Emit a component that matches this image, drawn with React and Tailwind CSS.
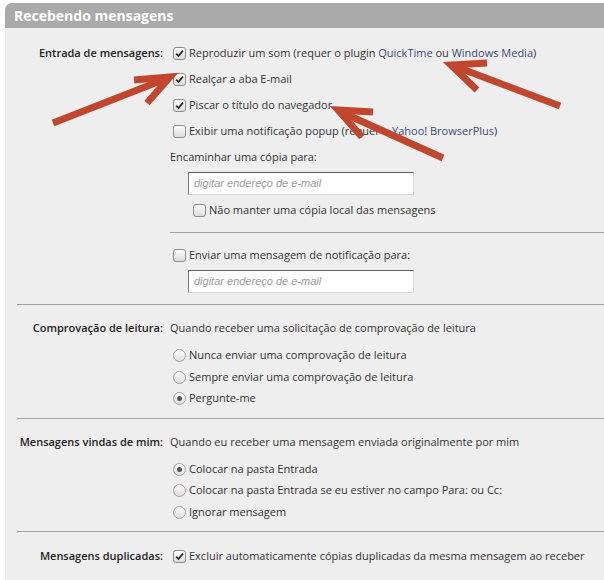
import React from "react";

const font = { fontFamily: '"Open Sans", "Noto Sans", sans-serif' };

function Check({ checked }) {
  return (
    <span className="inline-flex h-[13px] w-[13px] shrink-0 items-center justify-center rounded-[3px] border border-[#8e8e8e] bg-gradient-to-b from-[#fdfdfd] to-[#dcdcdc]">
      {checked && (
        <svg width="9" height="9" viewBox="0 0 9 9">
          <path d="M1.2 4.6 L3.5 7 L7.9 1.6" fill="none" stroke="#2a2a2a" strokeWidth="1.8" />
        </svg>
      )}
    </span>
  );
}

function Radio({ checked }) {
  return (
    <span className="inline-flex h-[13px] w-[13px] shrink-0 items-center justify-center rounded-full border border-[#a0a0a0] bg-gradient-to-b from-[#fdfdfd] to-[#dedede]">
      {checked && <span className="h-[5px] w-[5px] rounded-full bg-[#555]" />}
    </span>
  );
}

function Label({ children }) {
  return <div className="w-[158px] shrink-0 text-right font-semibold text-[#222]">{children}</div>;
}

function Input() {
  return (
    <div className="ml-[18px] flex h-[23px] w-[226px] items-center border-t border-l border-r border-b border-t-[#5e5e5e] border-l-[#7a7a7a] border-r-[#d6d6d6] border-b-[#d6d6d6] bg-white pl-[5px] text-[11px] italic text-[#9a9a9a]" style={{ fontFamily: '"Liberation Sans", Arial, sans-serif' }}>
      digitar endereço de e-mail
    </div>
  );
}

const Link = ({ children }) => <span className="text-[#3a4a78]">{children}</span>;

function Arrows() {
  const c = "#c1462e";
  const w = 7;
  return (
    <svg className="pointer-events-none absolute left-0 top-0" width="604" height="580">
      <g stroke={c} strokeWidth={w} fill="none" strokeLinecap="butt" strokeLinejoin="miter">
        <line x1="53" y1="123" x2="168" y2="78" />
        <polyline points="134,80 170,77 147,103" />
        <line x1="560" y1="106" x2="454" y2="66" />
        <polyline points="487,63 451,65 477,90" />
        <line x1="443" y1="158" x2="341" y2="112" />
        <polyline points="373,112 338,110 362,137" />
      </g>
    </svg>
  );
}

const Row = ({ children, className = "" }) => (
  <div className={"flex items-center gap-[3px] pl-[3px] " + className}>{children}</div>
);

export default function App() {
  return (
    <div className="relative h-[580px] w-[604px] overflow-hidden bg-white pl-[5px] pt-[3px] text-[11px] text-[#333]" style={font}>
      <div className="flex h-full flex-col overflow-hidden rounded-tl-[7px] bg-[#eeeeee]">
        <div className="flex h-[25px] shrink-0 items-center bg-[#aaaaaa] pl-[9px] text-[14px] font-bold text-white">
          Recebendo mensagens
        </div>

        {/* Section 1 */}
        <div className="mt-[12px] flex">
          <div className="flex h-[26px] items-center">
            <Label>Entrada de mensagens:</Label>
          </div>
          <div className="ml-[7px] flex flex-1 flex-col">
            <Row className="h-[26px]">
              <Check checked />
              <span>
                Reproduzir um som (requer o plugin <Link>QuickTime</Link> ou <Link>Windows Media</Link>)
              </span>
            </Row>
            <Row className="h-[26px]">
              <Check checked />
              <span>Realçar a aba E-mail</span>
            </Row>
            <Row className="h-[26px]">
              <Check checked />
              <span>Piscar o título do navegador</span>
            </Row>
            <Row className="h-[26px]">
              <Check />
              <span>
                Exibir uma notificação popup (requer o <Link>Yahoo! BrowserPlus</Link>)
              </span>
            </Row>
            <div className="flex h-[26px] items-center">Encaminhar uma cópia para:</div>
            <div className="mt-[2px]">
              <Input />
            </div>
            <Row className="mt-[3px] h-[24px] !pl-[23px]">
              <Check />
              <span>Não manter uma cópia local das mensagens</span>
            </Row>
            <div className="mt-[10px] h-px bg-[#a3a3a3]" />
            <Row className="mt-[10px] h-[24px]">
              <Check />
              <span>Enviar uma mensagem de notificação para:</span>
            </Row>
            <div className="mt-[3px]">
              <Input />
            </div>
          </div>
        </div>

        <div className="ml-[12px] mt-[11px] h-px bg-[#a3a3a3]" />

        {/* Section 2 */}
        <div className="mt-[11px] flex">
          <div className="flex h-[24px] items-center">
            <Label>Comprovação de leitura:</Label>
          </div>
          <div className="ml-[7px] flex flex-1 flex-col">
            <div className="flex h-[24px] items-center">
              Quando receber uma solicitação de comprovação de leitura
            </div>
            <Row className="mt-[4px] h-[22px]">
              <Radio />
              <span>Nunca enviar uma comprovação de leitura</span>
            </Row>
            <Row className="h-[22px]">
              <Radio />
              <span>Sempre enviar uma comprovação de leitura</span>
            </Row>
            <Row className="h-[21px]">
              <Radio checked />
              <span>Pergunte-me</span>
            </Row>
          </div>
        </div>

        <div className="ml-[12px] mt-[9px] h-px bg-[#a3a3a3]" />

        {/* Section 3 */}
        <div className="mt-[11px] flex">
          <div className="flex h-[24px] items-center">
            <Label>Mensagens vindas de mim:</Label>
          </div>
          <div className="ml-[7px] flex flex-1 flex-col">
            <div className="flex h-[24px] items-center">
              Quando eu receber uma mensagem enviada originalmente por mim
            </div>
            <Row className="mt-[4px] h-[22px]">
              <Radio checked />
              <span>Colocar na pasta Entrada</span>
            </Row>
            <Row className="h-[21px]">
              <Radio />
              <span>Colocar na pasta Entrada se eu estiver no campo Para: ou Cc:</span>
            </Row>
            <Row className="h-[22px]">
              <Radio />
              <span>Ignorar mensagem</span>
            </Row>
          </div>
        </div>

        <div className="ml-[12px] mt-[8px] h-px bg-[#a3a3a3]" />

        {/* Section 4 */}
        <div className="mt-[12px] flex">
          <div className="flex h-[24px] items-center">
            <Label>Mensagens duplicadas:</Label>
          </div>
          <Row className="ml-[7px] h-[24px] flex-1">
            <Check checked />
            <span>Excluir automaticamente cópias duplicadas da mesma mensagem ao receber</span>
          </Row>
        </div>
      </div>
      <Arrows />
    </div>
  );
}
